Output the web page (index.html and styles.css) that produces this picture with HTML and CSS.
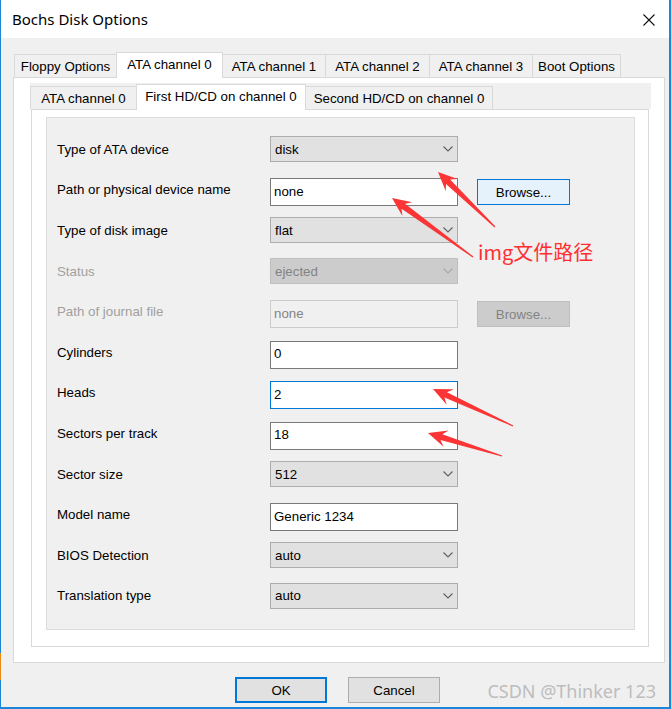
FILE: index.html
```html
<!DOCTYPE html>
<html>
<head>
<meta charset="utf-8">
<title>Bochs Disk Options</title>
<link rel="stylesheet" href="styles.css">
</head>
<body>
<div class="window">
  <div class="titlebar">
    <span class="title">Bochs Disk Options</span>
    <svg class="close" viewBox="0 0 12 12" width="12" height="12"><path d="M0.5 0.5 L11.5 11.5 M11.5 0.5 L0.5 11.5" stroke="#111" stroke-width="1.1" fill="none"/></svg>
  </div>
  <div class="client">
    <div class="tabs">
      <div class="tab t1">Floppy Options</div>
      <div class="tab sel t2">ATA channel 0</div>
      <div class="tab t3">ATA channel 1</div>
      <div class="tab t4">ATA channel 2</div>
      <div class="tab t5">ATA channel 3</div>
      <div class="tab t6 last">Boot Options</div>
    </div>
    <div class="panel">
      <div class="subtabs">
        <div class="subtab s1">ATA channel 0</div>
        <div class="subtab sel s2">First HD/CD on channel 0</div>
        <div class="subtab s3 last">Second HD/CD on channel 0</div>
      </div>
      <div class="page">
        <div class="form">
          <div class="row"><span class="lbl">Type of ATA device</span><div class="combo"><span>disk</span><svg class="chev" viewBox="0 0 10 6" width="10" height="6"><path d="M0.5 0.5 L5 5 L9.5 0.5" fill="none" stroke="#606060" stroke-width="1.1"/></svg></div></div>
          <div class="row"><span class="lbl">Path or physical device name</span><div class="edit">none</div><div class="browse">Browse...</div></div>
          <div class="row"><span class="lbl">Type of disk image</span><div class="combo"><span>flat</span><svg class="chev" viewBox="0 0 10 6" width="10" height="6"><path d="M0.5 0.5 L5 5 L9.5 0.5" fill="none" stroke="#606060" stroke-width="1.1"/></svg></div></div>
          <div class="row"><span class="lbl dis">Status</span><div class="combo off"><span>ejected</span><svg class="chev" viewBox="0 0 10 6" width="10" height="6"><path d="M0.5 0.5 L5 5 L9.5 0.5" fill="none" stroke="#a8a8a8" stroke-width="1.1"/></svg></div></div>
          <div class="row"><span class="lbl dis">Path of journal file</span><div class="edit off">none</div><div class="browse off">Browse...</div></div>
          <div class="row"><span class="lbl">Cylinders</span><div class="edit">0</div></div>
          <div class="row"><span class="lbl">Heads</span><div class="edit focus">2</div></div>
          <div class="row"><span class="lbl">Sectors per track</span><div class="edit">18</div></div>
          <div class="row"><span class="lbl">Sector size</span><div class="combo"><span>512</span><svg class="chev" viewBox="0 0 10 6" width="10" height="6"><path d="M0.5 0.5 L5 5 L9.5 0.5" fill="none" stroke="#606060" stroke-width="1.1"/></svg></div></div>
          <div class="row"><span class="lbl">Model name</span><div class="edit">Generic 1234</div></div>
          <div class="row"><span class="lbl">BIOS Detection</span><div class="combo"><span>auto</span><svg class="chev" viewBox="0 0 10 6" width="10" height="6"><path d="M0.5 0.5 L5 5 L9.5 0.5" fill="none" stroke="#606060" stroke-width="1.1"/></svg></div></div>
          <div class="row"><span class="lbl">Translation type</span><div class="combo"><span>auto</span><svg class="chev" viewBox="0 0 10 6" width="10" height="6"><path d="M0.5 0.5 L5 5 L9.5 0.5" fill="none" stroke="#606060" stroke-width="1.1"/></svg></div></div>
        </div>
      </div>
    </div>
    <div class="buttons">
      <div class="btn default">OK</div>
      <div class="btn">Cancel</div>
    </div>
  </div>
</div>

<svg class="annot" viewBox="0 0 671 709" width="671" height="709">
  <g fill="#fb3535">
    <g transform="translate(438 172) rotate(43.98)"><polygon points="0,0 19,-8.5 14,-3 79.2,-0.6 79.2,0.6 14,3 19,8.5"/></g>
    <g transform="translate(392 198) rotate(36.07)"><polygon points="0,0 19,-8.5 14,-3 100.2,-0.6 100.2,0.6 14,3 19,8.5"/></g>
    <g transform="translate(433 389) rotate(24.8)"><polygon points="0,0 19,-8.5 14,-3 88.1,-0.6 88.1,0.6 14,3 19,8.5"/></g>
    <g transform="translate(428 433) rotate(17.3)"><polygon points="0,0 19,-8.5 14,-3 77.5,-0.6 77.5,0.6 14,3 19,8.5"/></g>
  </g>
</svg>
<div class="note">img文件路径</div>
<div class="watermark">CSDN @Thinker 123</div>
<div class="edge-orange"></div>
</body>
</html>
```

FILE: styles.css
```css
html, body {
  margin: 0;
  padding: 0;
}

body {
  width: 671px;
  height: 709px;
  overflow: hidden;
  position: relative;
  background: #f0f0f0;
  font-family: "Liberation Sans", Arial, sans-serif;
  font-size: 13.3px;
  color: #000;
}

.window {
  box-sizing: border-box;
  width: 671px;
  height: 709px;
  border-left: 1px solid #1c86d8;
  border-right: 2px solid #1c86d8;
  border-bottom: 2px solid #1c86d8;
  background: #f0f0f0;
  display: flex;
  flex-direction: column;
}

.titlebar {
  box-sizing: border-box;
  height: 38px;
  flex: none;
  background: #fff;
  display: flex;
  align-items: center;
  padding: 0 14px 0 11px;
}

.title {
  font-family: "Noto Sans", "Open Sans", sans-serif;
  font-size: 15px;
  color: #000;
}

.close {
  margin-left: auto;
  margin-top: 2px;
  display: block;
}

.client {
  flex: 1;
  padding: 14px 0 0 12px;
}

/* outer tabs */
.tabs {
  display: flex;
  align-items: flex-end;
  height: 25px;
  padding-left: 1px;
}

.tab {
  box-sizing: border-box;
  height: 23px;
  border-left: 1px solid #d9d9d9;
  border-top: 1px solid #d9d9d9;
  background: #f0f0f0;
  display: flex;
  align-items: center;
  justify-content: center;
  white-space: nowrap;
}

.tab.last {
  border-right: 1px solid #d9d9d9;
}

.tab.sel {
  height: 26px;
  margin-bottom: -1px;
  background: #fff;
  border-right: 1px solid #d9d9d9;
  padding-bottom: 3px;
  position: relative;
  z-index: 2;
}

.tab.sel + .tab {
  border-left: none;
}

.t1 { width: 102px; }
.t2 { width: 107px; }
.t3 { width: 102px; }
.t4 { width: 104px; }
.t5 { width: 103px; }
.t6 { width: 89px; }

.panel {
  box-sizing: border-box;
  width: 652px;
  height: 586px;
  background: #fff;
  border: 1px solid #d9d9d9;
  padding: 5px 0 0 16px;
}

/* inner tabs */
.subtabs {
  display: flex;
  align-items: flex-end;
  width: 621px;
  height: 26px;
  background: #f0f0f0;
}

.subtab {
  box-sizing: border-box;
  height: 23px;
  border-left: 1px solid #d9d9d9;
  border-top: 1px solid #d9d9d9;
  background: #f0f0f0;
  display: flex;
  align-items: center;
  justify-content: center;
  white-space: nowrap;
}

.subtab.last {
  border-right: 1px solid #d9d9d9;
}

.subtab.sel {
  height: 26px;
  margin-bottom: -1px;
  background: #fff;
  border-right: 1px solid #d9d9d9;
  padding-bottom: 3px;
  position: relative;
  z-index: 2;
}

.subtab.sel + .subtab {
  border-left: none;
}

.s1 { width: 106px; }
.s2 { width: 170px; }
.s3 { width: 187px; }

.page {
  box-sizing: border-box;
  width: 618px;
  height: 538px;
  margin-left: 1px;
  background: #fff;
  border: 1px solid #d9d9d9;
  padding: 7px 0 0 14px;
}

.form {
  box-sizing: border-box;
  width: 589px;
  height: 513px;
  background: #f0f0f0;
  border: 1px solid #dcdcdc;
  padding: 11px 0 0 10px;
}

.row {
  display: flex;
  align-items: center;
  height: 40.6px;
}

.lbl {
  width: 213px;
  flex: none;
  white-space: nowrap;
}

.lbl.dis {
  color: #a0a0a0;
}

.combo {
  box-sizing: border-box;
  width: 188px;
  height: 26px;
  background: #e1e1e1;
  border: 1px solid #adadad;
  display: flex;
  align-items: center;
  padding: 0 4px 0 4px;
}

.combo .chev {
  margin-left: auto;
  display: block;
}

.combo.off {
  background: #cccccc;
  border-color: #bfbfbf;
  color: #838383;
}

.edit {
  box-sizing: border-box;
  width: 188px;
  height: 28px;
  margin-top: 5px;
  background: #fff;
  border: 1px solid #7a7a7a;
  display: flex;
  align-items: center;
  padding: 0 0 2px 3px;
}

.edit.focus {
  border-color: #0078d7;
}

.edit.off {
  background: #f0f0f0;
  border-color: #cccccc;
  color: #838383;
}

.browse {
  box-sizing: border-box;
  width: 93px;
  height: 26px;
  margin-left: 19px;
  margin-top: 5px;
  background: #e5f1fb;
  border: 1px solid #0078d7;
  display: flex;
  align-items: center;
  justify-content: center;
}

.browse.off {
  background: #cccccc;
  border-color: #bfbfbf;
  color: #838383;
}

.buttons {
  display: flex;
  gap: 21px;
  padding-left: 222px;
  margin-top: 14px;
}

.btn {
  box-sizing: border-box;
  width: 92px;
  height: 26px;
  background: #e1e1e1;
  border: 1px solid #adadad;
  display: flex;
  align-items: center;
  justify-content: center;
}

.btn.default {
  border: 2px solid #0078d7;
}

/* annotations over the screenshot */
.annot {
  position: absolute;
  left: 0;
  top: 0;
  pointer-events: none;
}

.note {
  position: absolute;
  left: 478px;
  top: 240px;
  font-family: "Noto Sans CJK SC", "Noto Sans", sans-serif;
  font-size: 20px;
  line-height: 24px;
  color: #ff2f2f;
  white-space: nowrap;
}

.watermark {
  position: absolute;
  right: 15px;
  top: 679px;
  font-family: "Noto Sans", "Open Sans", sans-serif;
  font-size: 18px;
  line-height: 24px;
  color: #bdbdbd;
  white-space: nowrap;
}

.edge-orange {
  position: absolute;
  left: 0;
  top: 653px;
  width: 1px;
  height: 27px;
  background: #e98a12;
}
```
